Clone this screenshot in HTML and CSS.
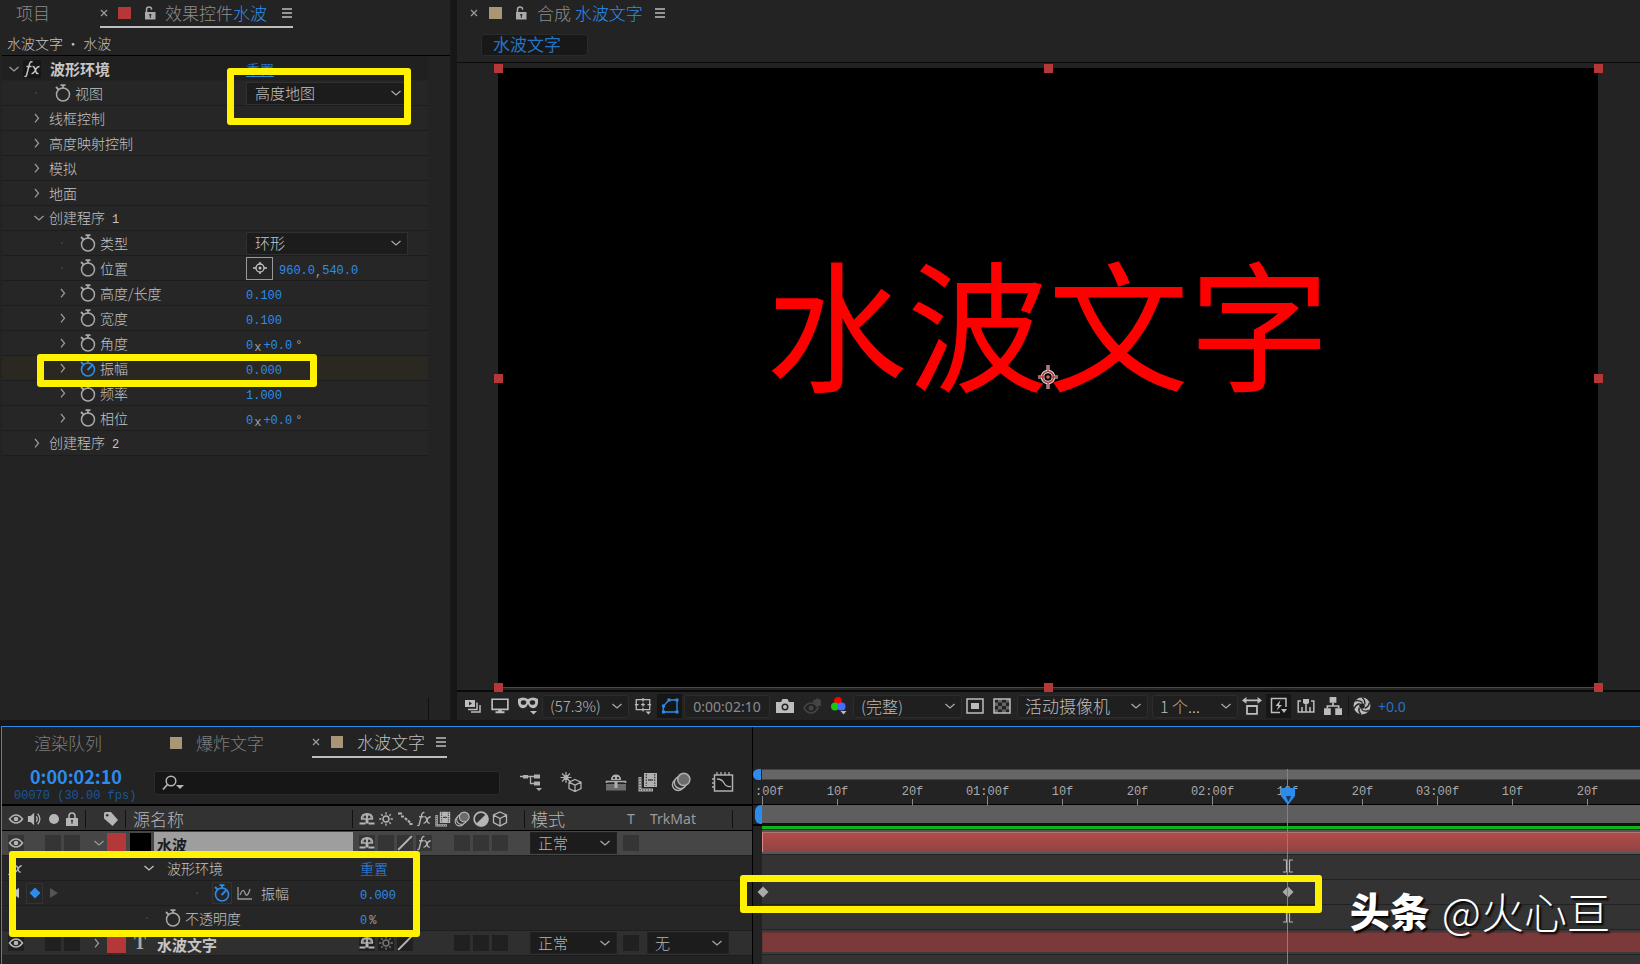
FILE: index.html
```html
<!DOCTYPE html>
<html lang="zh-CN">
<head>
<meta charset="utf-8">
<title>水波文字</title>
<link rel="stylesheet" href="styles.css">
</head>
<body>
<svg class="defs" aria-hidden="true">
  <symbol id="watch" viewBox="0 0 16 18"><circle cx="8" cy="10.5" r="6.5" fill="none" stroke="currentColor" stroke-width="1.5"/><path d="M5.5 1.2h5M8 1v3.5M1 3l2.500 2.500" fill="none" stroke="currentColor" stroke-width="1.8"/></symbol>
  <symbol id="watch-on" viewBox="0 0 16 18"><circle cx="8" cy="10.5" r="6.5" fill="none" stroke="currentColor" stroke-width="1.6"/><path d="M5.5 1.2h5M8 1v3.5M1 3l2.500 2.500M7.500 11l4.500-4.500" fill="none" stroke="currentColor" stroke-width="1.8"/></symbol>
  <symbol id="right" viewBox="0 0 16 16"><path d="M7 4l3.500 4.200L7 12.400" fill="none" stroke="currentColor" stroke-width="1.3"/></symbol>
  <symbol id="down" viewBox="0 0 16 16"><path d="M3.500 6L8 10l4.500-4" fill="none" stroke="currentColor" stroke-width="1.3"/></symbol>
  <symbol id="lock-open" viewBox="0 0 12 14"><path d="M2.500 6V3.500Q2.500 1 5 1t2.500 2v.8" fill="none" stroke="currentColor" stroke-width="1.500"/><path d="M1 6h10.500v7.500H1z" fill="currentColor"/><path d="M5.300 8h2v1.500h-.5V12h-1V9.500h-.5z" fill="#232323"/></symbol>
  <symbol id="lock" viewBox="0 0 12 14"><path d="M3 6V4q0-3 3-3t3 3v2" fill="none" stroke="currentColor" stroke-width="1.600"/><path d="M0 6h12v8H0z" fill="currentColor"/><path d="M5 8h2v1.500h-.5V12h-1V9.500H5z" fill="#323232"/></symbol>
  <symbol id="menu" viewBox="0 0 12 12"><path d="M1 2h10M1 6h10M1 10h10" stroke="currentColor" stroke-width="1.500"/></symbol>
  <symbol id="close" viewBox="0 0 8 8"><path d="M1 1l6 6M7 1L1 7" stroke="currentColor" stroke-width="1.300"/></symbol>
  <symbol id="fx" viewBox="0 0 18 18"><path d="M9.500 2Q7.500.8 6.500 4L3.500 15.500Q3 17 1.500 16M3.500 6.500h5M9.500 6.500Q11 6 12 9l1 3q.5 2 2.500 1.500M16.500 6.500Q14 6.500 12.500 10 10.500 14 8.500 13.500" fill="none" stroke="currentColor" stroke-width="1.500"/></symbol>
  <symbol id="target" viewBox="0 0 16 16"><circle cx="8" cy="8" r="4" fill="none" stroke="currentColor" stroke-width="1.300"/><circle cx="8" cy="8" r="1.500" fill="currentColor"/><path d="M8 2v2M8 12v2M1 8h3M12 8h3" stroke="currentColor" stroke-width="1.500"/></symbol>
  <symbol id="eye" viewBox="0 0 16 12"><path d="M1.500 6q3-4 6.500-4t6.500 4q-3 4-6.500 4T1.500 6z" fill="none" stroke="currentColor" stroke-width="1.600"/><circle cx="8" cy="6" r="2.300" fill="currentColor"/></symbol>
  <symbol id="speaker" viewBox="0 0 18 16"><path d="M1 4.500h3L8 1v14l-4-3.500H1z" fill="currentColor"/><path d="M10.500 5q2 3 0 6M12 2q5 6 0 12" fill="none" stroke="currentColor" stroke-width="1.400"/></symbol>
  <symbol id="tag" viewBox="0 0 16 16"><path d="M1 2.500Q1 1 2.500 1H8l7 8-5.500 6L1 7.500z" fill="currentColor"/><circle cx="4.200" cy="4.200" r="1.300" fill="#323232"/></symbol>
  <symbol id="shy" viewBox="0 0 16 16"><path d="M2.500 8Q2.500 2.700 8 2.700T13.500 8M8 3v9M2 8h12" fill="none" stroke="currentColor" stroke-width="1.600"/><path d="M3.500 7Q4 3 8 3t4.500 4z" fill="currentColor" opacity=".65"/><path d="M5.200 5h1.600v2H5.200zM9.200 5h1.600v2H9.200z" fill="#262626"/><path d="M.5 12.500h6M9.500 12.500h6" stroke="currentColor" stroke-width="1.800"/><path d="M6.500 9h3v3.500h-3z" fill="currentColor"/></symbol>
  <symbol id="sun" viewBox="0 0 14 14"><circle cx="7" cy="7" r="2.600" fill="none" stroke="currentColor" stroke-width="1.300"/><path d="M7 1v2M7 11v2M1 7h2M11 7h2M2.800 2.800l1.300 1.300M9.900 9.900l1.300 1.300M11.200 2.800L9.900 4.100M4.100 9.900l-1.300 1.300" stroke="currentColor" stroke-width="1.200"/></symbol>
  <symbol id="dash" viewBox="0 0 16 16"><path d="M1 2.500h4M4 5.500h3M8 7l2 2M11 9.500l2 2M12.500 13h3" stroke="currentColor" stroke-width="2.200"/></symbol>
  <symbol id="slash" viewBox="0 0 14 14"><path d="M1 13L13 1" stroke="currentColor" stroke-width="1.800"/></symbol>
  <symbol id="film" viewBox="0 0 20 20"><path d="M6 1h13v14H6z" fill="currentColor"/><path d="M8.300 2v12M16.700 2v12" stroke="#333" stroke-width="1.200" stroke-dasharray="1.400 1.400"/><path d="M10 8h5" stroke="#444" stroke-width="1.500"/><path d="M2 5v13h13" fill="none" stroke="currentColor" stroke-width="3"/><path d="M2 6v12h13" fill="none" stroke="#333" stroke-width="1" stroke-dasharray="1.400 1.400"/></symbol>
  <symbol id="blur" viewBox="0 0 18 18"><circle cx="6.500" cy="11.500" r="5.200" fill="none" stroke="currentColor" stroke-width="1.300"/><circle cx="8.500" cy="9.500" r="5.500" fill="#323232" stroke="currentColor" stroke-width="1.300"/><circle cx="11.500" cy="6.700" r="5.500" fill="#6c6c6c" stroke="currentColor" stroke-width="1.300"/></symbol>
  <symbol id="half" viewBox="0 0 14 14"><circle cx="7" cy="7" r="6" fill="none" stroke="currentColor" stroke-width="1.500"/><path d="M11.200 2.800A6 6 0 1 1 2.800 11.200z" fill="currentColor"/></symbol>
  <symbol id="cube" viewBox="0 0 16 16"><path d="M8 1l6.500 3v7.500L8 15l-6.500-3.500V4zM1.500 4L8 7.500 14.500 4M8 7.500V15" fill="none" stroke="currentColor" stroke-width="1.300"/></symbol>
  <symbol id="graph" viewBox="0 0 16 14"><path d="M1 1v12h14M3 9q3-8 5-2t5-4" fill="none" stroke="currentColor" stroke-width="1.300"/></symbol>
  <symbol id="diamond" viewBox="0 0 12 12"><path d="M6 .5L11.500 6 6 11.500.5 6z" fill="currentColor"/></symbol>
  <symbol id="play" viewBox="0 0 8 12"><path d="M0 1l8 5-8 5z" fill="currentColor"/></symbol>
  <symbol id="back" viewBox="0 0 8 12"><path d="M8 1L0 6l8 5z" fill="currentColor"/></symbol>
  <symbol id="search" viewBox="0 0 22 16"><circle cx="9" cy="6" r="4.800" fill="none" stroke="currentColor" stroke-width="1.500"/><path d="M5.500 9.500L1 14.500" stroke="currentColor" stroke-width="1.800"/><path d="M14 10h8l-4 4z" fill="currentColor"/></symbol>
  <symbol id="tree" viewBox="0 0 22 20"><path d="M0 4.500h14M10.500 4.500v7H15" fill="none" stroke="currentColor" stroke-width="1.300"/><path d="M3 3h5v3.500H3zM14 2.500h6v4h-6zM14 9.500h6v4h-6zM16 16h6l-3 3z" fill="currentColor"/></symbol>
  <symbol id="draft" viewBox="0 0 22 20"><path d="M6 0v11M.500 5.500h11M2 1.500l8 8M10 1.500l-8 8" stroke="currentColor" stroke-width="1.200"/><circle cx="6" cy="5.500" r="2.500" fill="currentColor"/><path d="M15 7.500l6 2.700v6.300L15 19.500l-6-3v-6.300zM9 10.200l6 3 6-3M15 13.200v6.300" fill="#232323" stroke="currentColor" stroke-width="1.300"/></symbol>
  <symbol id="shy-all" viewBox="0 0 22 20"><path d="M1 12h20v6.500H1z" fill="#6c6c6c"/><path d="M6 8Q6 2.500 11 2.500T16 8z" fill="currentColor"/><path d="M8 5h2v2H8zM12 5h2v2h-2z" fill="#333"/><path d="M1.500 11V9.500h19V11" fill="none" stroke="currentColor" stroke-width="1.500"/><path d="M9.500 9h3v7h-3z" fill="currentColor"/></symbol>
  <symbol id="curve" viewBox="0 0 22 20"><path d="M2.500 3h18v16h-18z" fill="#1b1b1b" stroke="currentColor" stroke-width="1.500"/><path d="M5 0v3M9 0v3M13 0v3M17 0v3M0 7h2M0 11h2M0 15h2M5 7q5 0 7 4t7 3.500" fill="none" stroke="currentColor" stroke-width="1.300"/></symbol>
  <symbol id="stack" viewBox="0 0 18 14"><path d="M1 1h10v7H1z" fill="currentColor"/><path d="M5 2.500l3 2-3 2z" fill="#232323"/><path d="M13 3.500v7H4M16 6v7H7" fill="none" stroke="currentColor" stroke-width="1.500"/></symbol>
  <symbol id="monitor" viewBox="0 0 16 14"><path d="M1 1h14v9H1z" fill="none" stroke="currentColor" stroke-width="1.500"/><path d="M4 12.500h8M6.500 11.500h3" stroke="currentColor" stroke-width="1.800"/></symbol>
  <symbol id="mask" viewBox="0 0 20 18"><path d="M0 2q5-3 10 0 5-3 10 0v4q-1 6-6 5-3-1-4-4-1 3-4 4-5 1-6-5z" fill="currentColor"/><ellipse cx="5.500" cy="5.500" rx="2.700" ry="2.300" fill="#232323"/><ellipse cx="14.500" cy="5.500" rx="2.700" ry="2.300" fill="#232323"/><path d="M12 14h7l-3.500 3.500z" fill="currentColor"/></symbol>
  <symbol id="grid" viewBox="0 0 18 20"><path d="M1.500 3h15v11h-15zM9 1v4M9 6.500v4M9 12v4M0 8.500h4M7 8.500h4M14 8.500h4" fill="none" stroke="currentColor" stroke-width="1.400"/><path d="M12 16h6l-3 3.500z" fill="currentColor"/></symbol>
  <symbol id="shape" viewBox="0 0 18 16"><path d="M2 14l.5-6L8 2h8v12z" fill="none" stroke="currentColor" stroke-width="1.300"/><path d="M1 12.500h3v3H1zM14.500 12.500h3v3h-3zM14.500 .5h3v3h-3zM6.500 .5h3v3h-3zM1 6.500h3v3H1z" fill="currentColor"/></symbol>
  <symbol id="camera" viewBox="0 0 18 16"><path d="M0 4h5l1.500-3h5L13 4h5v11H0z" fill="currentColor"/><circle cx="9" cy="9" r="3.500" fill="#232323"/><circle cx="9" cy="9" r="2" fill="currentColor"/></symbol>
  <symbol id="snap" viewBox="0 0 18 16"><path d="M1 10q3-5 7-5t7 5q-3 5-7 5t-7-5z" fill="none" stroke="currentColor" stroke-width="1.500"/><circle cx="8" cy="10" r="2.500" fill="currentColor"/><path d="M10 2h2l1-1.500h3L17 2h1v6h-4l-4-4z" fill="currentColor"/></symbol>
  <symbol id="rgb" viewBox="0 0 16 18"><circle cx="7" cy="4" r="4" fill="#f00"/><circle cx="4" cy="9.500" r="4" fill="#1bc40e"/><circle cx="10.500" cy="9.500" r="4" fill="#466cff"/><path d="M9.500 14h6l-3 3.500z" fill="#bbb"/></symbol>
  <symbol id="roi" viewBox="0 0 18 16"><path d="M1 1h16v14H1z" fill="none" stroke="currentColor" stroke-width="1.500"/><path d="M5 5h8v6H5z" fill="currentColor"/></symbol>
  <symbol id="checker" viewBox="0 0 18 16"><path d="M5 1h4v3.500H5zM13 1h4v3.500h-4zM1 4.500h4V8H1zM9 4.500h4V8H9zM5 8h4v3.500H5zM13 8h4v3.500h-4zM1 11.500h4V15H1zM9 11.500h4V15H9z" fill="#666"/><path d="M1 1h16v14H1z" fill="none" stroke="currentColor" stroke-width="1.500"/></symbol>
  <symbol id="aspect" viewBox="0 0 18 16"><path d="M3 3h12M4.500 8h9v7h-9z" fill="none" stroke="currentColor" stroke-width="1.600"/><path d="M4 0v6L0 3zM14 0v6l4-3z" fill="currentColor"/></symbol>
  <symbol id="fast" viewBox="0 0 18 18"><path d="M16 10V1.500H1.500v14H10" fill="none" stroke="currentColor" stroke-width="1.500"/><path d="M10.500 3l-5 6h3l-2 4.500L12 8H9zM11 12h6l-3 4z" fill="currentColor"/></symbol>
  <symbol id="tline" viewBox="0 0 18 14"><path d="M4 2H1.200v11h15.600V2H14M5 13V8M9 13V6M13 13V8" fill="none" stroke="currentColor" stroke-width="1.500"/><path d="M6 0h6v4L9 6 6 4z" fill="currentColor"/></symbol>
  <symbol id="flow" viewBox="0 0 16 16"><path d="M5 0h6v5H5zM0 10h6v6H0zM10 10h6v6h-6z" fill="currentColor"/><path d="M8 5v3M3 10V8h10v2" fill="none" stroke="currentColor" stroke-width="1.500"/></symbol>
  <symbol id="iris" viewBox="0 0 16 16"><circle cx="8" cy="8" r="5" fill="none" stroke="currentColor" stroke-width="5"/><path d="M8 .5Q11 3 10.500 6.500M14.500 5Q14 9 10.500 10M14 12Q10 13.500 7.500 11M7 15.500Q4.500 12.500 5.500 9.500M1 10.500Q2.500 6.500 6 6M2 3.500Q6 2.500 8.500 5" fill="none" stroke="#232323" stroke-width="1.200"/></symbol>
  <symbol id="anchor" viewBox="0 0 22 26"><path d="M11 1v6M11 19v6M1 13h6M15 13h6" stroke="#ddd" stroke-width="3"/><circle cx="11" cy="13" r="5.500" fill="none" stroke="#ddd" stroke-width="3.600"/><circle cx="11" cy="13" r="5.500" fill="none" stroke="#b53a3a" stroke-width="1.500"/><path d="M11 1v6M11 19v6M1 13h6M15 13h6" stroke="#b53a3a" stroke-width="1.300"/><circle cx="11" cy="13" r="1.800" fill="#c66"/></symbol>
  <symbol id="cti" viewBox="0 0 16 18"><path d="M1 1h14v8l-7 9-7-9z" fill="#2d8ceb"/><path d="M6 9h5l-1 3-1.500 3L7 12z" fill="#1b3b5e"/></symbol>
  <symbol id="ibeam" viewBox="0 0 10 14"><path d="M0 1h4M6 1h4M0 13h4M6 13h4M3.500 1v12M6.500 1v12" stroke="#b5b5b5" stroke-width="1.200"/></symbol>
</svg>

<main class="app">
  <div class="upper">
    <section class="effects">
      <header class="tabs">
        <span class="tab project">项目</span>
        <span class="tab active">
          <svg class="i8"><use href="#close"/></svg><i class="chip red"></i><svg class="ilock"><use href="#lock-open"/></svg>
          <span class="title">效果控件<b>水波</b></span><svg class="i12"><use href="#menu"/></svg>
        </span>
      </header>
      <div class="path">水波文字 • 水波</div>
      <div class="props">
        <div class="row head"><span class="name d0"><svg class="i16"><use href="#down"/></svg><span class="fxbox"><svg class="i18"><use href="#fx"/></svg></span><strong>波形环境</strong></span><a class="link" href="#">重置</a></div>
        <div class="row"><label class="name d1" for="view"><i class="dot"></i><svg class="watch"><use href="#watch"/></svg>视图</label><span class="pick"><select id="view"><option>高度地图</option></select><svg class="i16"><use href="#down"/></svg></span></div>
        <div class="row"><span class="name d1"><svg class="i16"><use href="#right"/></svg><span class="group">线框控制</span></span></div>
        <div class="row"><span class="name d1"><svg class="i16"><use href="#right"/></svg><span class="group">高度映射控制</span></span></div>
        <div class="row"><span class="name d1"><svg class="i16"><use href="#right"/></svg><span class="group">模拟</span></span></div>
        <div class="row"><span class="name d1"><svg class="i16"><use href="#right"/></svg><span class="group">地面</span></span></div>
        <div class="row"><span class="name d1 open"><svg class="i16"><use href="#down"/></svg><span class="group">创建程序<span class="mono">1</span></span></span></div>
        <div class="row"><label class="name d2" for="kind"><i class="dot"></i><svg class="watch"><use href="#watch"/></svg>类型</label><span class="pick"><select id="kind"><option>环形</option></select><svg class="i16"><use href="#down"/></svg></span></div>
        <div class="row"><span class="name d2"><i class="dot"></i><svg class="watch"><use href="#watch"/></svg>位置</span><button class="point" aria-label="位置"><svg class="i16"><use href="#target"/></svg></button><span class="num">960.0<em>,</em>540.0</span></div>
        <div class="row"><span class="name d2"><svg class="i16"><use href="#right"/></svg><svg class="watch"><use href="#watch"/></svg>高度/长度</span><span class="num">0.100</span></div>
        <div class="row"><span class="name d2"><svg class="i16"><use href="#right"/></svg><svg class="watch"><use href="#watch"/></svg>宽度</span><span class="num">0.100</span></div>
        <div class="row"><span class="name d2"><svg class="i16"><use href="#right"/></svg><svg class="watch"><use href="#watch"/></svg>角度</span><span class="num">0<em class="turn">x</em>+0.0<em class="deg">°</em></span></div>
        <div class="row keyed"><span class="name d2"><svg class="i16"><use href="#right"/></svg><svg class="watch on"><use href="#watch-on"/></svg>振幅</span><span class="num">0.000</span></div>
        <div class="row"><span class="name d2"><svg class="i16"><use href="#right"/></svg><svg class="watch"><use href="#watch"/></svg>频率</span><span class="num">1.000</span></div>
        <div class="row"><span class="name d2"><svg class="i16"><use href="#right"/></svg><svg class="watch"><use href="#watch"/></svg>相位</span><span class="num">0<em class="turn">x</em>+0.0<em class="deg">°</em></span></div>
        <div class="row"><span class="name d1"><svg class="i16"><use href="#right"/></svg><span class="group">创建程序<span class="mono">2</span></span></span></div>
      </div>
      <i class="corner"></i>
      <div class="mark mark-view"></div>
      <div class="mark mark-amp"></div>
    </section>

    <section class="comp">
      <header class="tabs comp-tabs">
        <svg class="i8"><use href="#close"/></svg><i class="chip tan"></i><svg class="ilock"><use href="#lock-open"/></svg>
        <span class="title">合成 <b>水波文字</b></span><svg class="i12"><use href="#menu"/></svg>
      </header>
      <div class="flowbar"><button class="flowtab">水波文字</button></div>
      <div class="viewer">
        <div class="canvas">
          <span class="water">水波文字</span>
          <svg class="anchor"><use href="#anchor"/></svg>
          <i class="h tl"></i><i class="h tc"></i><i class="h tr"></i><i class="h ml"></i><i class="h mr"></i><i class="h bl"></i><i class="h bc"></i><i class="h br"></i>
        </div>
      </div>
      <footer class="viewbar">
        <svg class="v18"><use href="#stack"/></svg>
        <svg class="v18 g8"><use href="#monitor"/></svg>
        <svg class="v20 g8"><use href="#mask"/></svg>
        <span class="pick zoom"><select aria-label="缩放"><option>(57.3%)</option></select><svg class="i16"><use href="#down"/></svg></span>
        <svg class="v20 g4"><use href="#grid"/></svg>
        <span class="vbox g4 blue"><svg class="v18"><use href="#shape"/></svg></span>
        <button class="time">0:00:02:10</button>
        <svg class="v18 g6"><use href="#camera"/></svg>
        <svg class="v18 g8 dim"><use href="#snap"/></svg>
        <svg class="v18 g8"><use href="#rgb"/></svg>
        <span class="pick res"><select aria-label="分辨率"><option>(完整)</option></select><svg class="i16"><use href="#down"/></svg></span>
        <svg class="v18 g4"><use href="#roi"/></svg>
        <svg class="v18 g8"><use href="#checker"/></svg>
        <span class="pick camsel"><select aria-label="视图"><option>活动摄像机</option></select><svg class="i16"><use href="#down"/></svg></span>
        <span class="pick views"><select aria-label="视图数"><option>1 个...</option></select><svg class="i16"><use href="#down"/></svg></span>
        <svg class="v20 g4"><use href="#aspect"/></svg>
        <span class="vbox g4"><svg class="v18"><use href="#fast"/></svg></span>
        <svg class="v18 g6"><use href="#tline"/></svg>
        <svg class="v18 g8"><use href="#flow"/></svg>
        <i class="split"></i>
        <svg class="v18 g4"><use href="#iris"/></svg>
        <span class="expo">+0.0</span>
      </footer>
    </section>
  </div>

  <section class="timeline">
    <div class="layers">
      <header class="ttabs">
        <span class="tab">渲染队列</span>
        <span class="tab second"><i class="chip small tan"></i>爆炸文字</span>
        <span class="tab active"><svg class="i8"><use href="#close"/></svg><i class="chip small tan"></i><span>水波文字</span><svg class="i12"><use href="#menu"/></svg></span>
      </header>
      <div class="tools">
        <div class="clock"><strong>0:00:02:10</strong><span>00070 (30.00 fps)</span></div>
        <label class="search"><svg><use href="#search"/></svg><input type="text" aria-label="搜索"></label>
        <div class="toggles">
          <svg><use href="#tree"/></svg><svg><use href="#draft"/></svg><svg><use href="#shy-all"/></svg><svg><use href="#film"/></svg><svg><use href="#blur"/></svg><svg><use href="#curve"/></svg>
        </div>
      </div>
      <div class="line cols">
        <span class="av"><svg class="i16"><use href="#eye"/></svg><svg class="i16"><use href="#speaker"/></svg><i class="solo"></i><svg class="i14"><use href="#lock"/></svg></span>
        <span class="lab"><svg class="i16"><use href="#tag"/></svg></span>
        <span class="src">源名称</span>
        <span class="sw"><svg><use href="#shy"/></svg><svg><use href="#sun"/></svg><svg><use href="#dash"/></svg><svg><use href="#fx"/></svg><svg><use href="#film"/></svg><svg><use href="#blur"/></svg><svg><use href="#half"/></svg><svg><use href="#cube"/></svg></span>
        <span class="mode"><span class="m1">模式</span><span class="m2">T</span><span class="m3">TrkMat</span></span>
      </div>
      <div class="line layer sel">
        <span class="av"><i class="cell"><svg class="i16"><use href="#eye"/></svg></i><i class="cell c2"></i><i class="cell"></i></span>
        <span class="lab"><svg class="i16"><use href="#down"/></svg><i class="color"></i></span>
        <span class="src"><i class="thumb"></i><strong>水波</strong></span>
        <span class="sw"><i><svg><use href="#shy"/></svg></i><i></i><i><svg><use href="#slash"/></svg></i><i><svg><use href="#fx"/></svg></i><u></u><i></i><i></i><i></i></span>
        <span class="mode"><span class="pick blend"><select aria-label="混合模式"><option>正常</option></select><svg class="i16"><use href="#down"/></svg></span><i class="cell"></i></span>
      </div>
      <div class="line prop"><span class="fxs"><svg class="i16"><use href="#fx"/></svg></span><span class="pname p1"><svg class="i16"><use href="#down"/></svg>波形环境</span><a class="link" href="#">重置</a></div>
      <div class="line prop"><span class="fxs nav"><svg class="arrow"><use href="#back"/></svg><button class="key" aria-label="关键帧"><svg><use href="#diamond"/></svg></button><svg class="arrow off"><use href="#play"/></svg></span><span class="pname p2"><i class="dot"></i><span class="wbox"><svg class="watch on"><use href="#watch-on"/></svg></span><svg class="i16"><use href="#graph"/></svg>振幅</span><span class="num">0.000</span></div>
      <div class="line prop"><span class="fxs"></span><span class="pname p3"><i class="dot"></i><svg class="watch"><use href="#watch"/></svg>不透明度</span><span class="num">0<em class="pct">%</em></span></div>
      <div class="line layer">
        <span class="av"><i class="cell"><svg class="i16"><use href="#eye"/></svg></i><i class="cell c2"></i><i class="cell"></i></span>
        <span class="lab shut"><svg class="i16"><use href="#right"/></svg><i class="color"></i></span>
        <span class="src"><i class="type">T</i><strong>水波文字</strong></span>
        <span class="sw"><i><svg><use href="#shy"/></svg></i><i class="faint"><svg><use href="#sun"/></svg></i><i><svg><use href="#slash"/></svg></i><u></u><u></u><i></i><i></i><i></i></span>
        <span class="mode"><span class="pick blend"><select aria-label="混合模式"><option>正常</option></select><svg class="i16"><use href="#down"/></svg></span><i class="cell"></i><span class="pick matte"><select aria-label="轨道遮罩"><option>无</option></select><svg class="i16"><use href="#down"/></svg></span></span>
      </div>
      <div class="mark mark-layer"></div>
    </div>

    <div class="graph">
      <div class="nav-bar"><i></i><span></span></div>
      <div class="ruler"><span class="first">:00f</span><span>10f</span><span>20f</span><span class="big">01:00f</span><span>10f</span><span>20f</span><span class="big">02:00f</span><span>10f</span><span>20f</span><span class="big">03:00f</span><span>10f</span><span>20f</span></div>
      <div class="work"><i></i><span></span></div>
      <div class="tracks">
        <div class="track hot"><span class="bar"></span></div>
        <div class="track"></div>
        <div class="track"></div>
        <div class="track"></div>
        <div class="track last"><span class="bar flat"></span></div>
      </div>
      <svg class="kf k1"><use href="#diamond"/></svg>
      <svg class="beam b1"><use href="#ibeam"/></svg>
      <svg class="beam b2"><use href="#ibeam"/></svg>
      <svg class="kf k2"><use href="#diamond"/></svg>
      <i class="playhead"></i>
      <svg class="cti"><use href="#cti"/></svg>
      <div class="mark mark-keys"></div>
    </div>
    <div class="credit"><strong>头条</strong><span>@火心亘</span></div>
  </section>
</main>
</body>
</html>
```
FILE: styles.css
```css
* { box-sizing: border-box; }
html, body { height: 100%; }
body {
  margin: 0;
  background: #161616;
  color: #c4c4c4;
  font: 14px/20px "Noto Sans CJK SC", sans-serif;
  font-weight: 300;
  overflow: hidden;
}
svg { flex: none; display: block; }
i, em, u { font-style: normal; text-decoration: none; flex: none; }
b { font-weight: inherit; color: #2d8ceb; }
select, button, input {
  font: inherit; color: inherit; background: none; border: 0; margin: 0; padding: 0;
  appearance: none; outline: 0;
}
.defs { position: absolute; width: 0; height: 0; }
.i8 { width: 8px; height: 8px; color: #999; }
.i12 { width: 12px; height: 12px; }
.i14 { width: 14px; height: 14px; }
.i16 { width: 16px; height: 16px; }
.i18 { width: 18px; height: 18px; }
.ilock { width: 12px; height: 14px; }

.app { display: flex; flex-direction: column; height: 100vh; min-width: 1200px; }
.upper { flex: 1; min-height: 0; display: flex; gap: 6px; margin-bottom: 6px; }

/* effect controls */
.effects { position: relative; width: 451px; background: #232323; padding-left: 2px; border-right: 1px solid #1b1b1b; }
.tabs { display: flex; height: 28px; font-size: 17px; line-height: 26px; color: #8c8c8c; }
.project { width: 98px; padding-left: 14px; }
.tab.active { display: flex; align-items: center; border-bottom: 2px solid #bdbdbd; }
.tab.active .i12 { margin-left: 14px; color: #bdbdbd; }
.chip { width: 13px; height: 12px; margin: 0 13px 0 11px; }
.chip.red { background: #b53838; margin-left: 10px; }
.chip.tan { background: #a99676; }
.chip.small { width: 12px; margin: 0 14px 0 0; }
.ilock { color: #aaa; margin-right: 10px; }
.effects .ilock { margin-right: 9px; }
.path { height: 28px; line-height: 30px; padding-left: 5px; border-bottom: 1px solid #000; }
.props { width: 426px; background: #262626; }
.row { display: flex; align-items: center; height: 25px; border-bottom: 1px solid #1d1d1d; }
.row.head { background: #202020; border-color: #232323; padding-top: 2px; }
.row.keyed { background: #2b2721; }
.name { display: flex; align-items: center; width: 244px; line-height: 24px; }
.name .i16 { color: #9a9a9a; }
.d0 { padding-left: 4px; }
.d1 { padding-left: 26px; }
.d1.open { padding-left: 29px; }
.d1.open .group { margin-left: 2px; }
.d2 { padding-left: 52px; }
.d1 .watch { margin-left: 11px; }
.group { margin-left: 5px; }
strong { font-weight: 700; font-size: 15px; color: #c6c6c6; }
.fxbox { background: #161616; margin: 0 9px 0 1px; }
.dot { width: 16px; height: 16px; display: flex; align-items: center; justify-content: center; }
.dot::before { content: ""; width: 2px; height: 2px; background: #3c3c3c; }
.watch { width: 16px; height: 18px; margin: 0 4px 0 10px; color: #a8a8a8; }
.watch.on { color: #2d8ceb; }
.link { color: #2d8ceb; text-decoration: none; }
.head .link { text-decoration: underline; }
.mono, .num { font-family: "Liberation Mono", monospace; font-size: 12px; font-weight: 400; }
.mono { margin-left: 7px; }
.num { color: #2d8ceb; padding-top: 5px; }
.num em { color: #a0a0a0; position: relative; top: 2px; }
.num .turn { padding: 0 2px 0 1px; }
.num em.deg { top: 0; padding-left: 3px; }
.num em.pct { top: 0; padding-left: 2px; }
.pick { position: relative; display: flex; align-items: center; height: 23px; width: 162px; border: 1px solid #303030; background: #1c1c1c; font-size: 15px; line-height: 20px; }
.pick select { width: 100%; height: 100%; padding-left: 8px; }
.pick > svg { position: absolute; right: 3px; pointer-events: none; color: #a8a8a8; }
.point { width: 27px; height: 23px; border: 1px solid #999; display: flex; align-items: center; justify-content: center; margin-right: 6px; }
.corner { position: absolute; left: 428px; bottom: 0; width: 1px; height: 22px; background: #111; }

/* annotations */
.mark { position: absolute; border: 7px solid #fff200; border-radius: 3px; pointer-events: none; }
.mark-view { left: 227px; top: 68px; width: 184px; height: 57px; }
.mark-amp { left: 37px; top: 354px; width: 280px; height: 33px; }
.mark-layer { left: 7px; top: 124px; width: 411px; height: 86px; }
.mark-keys { left: -13px; top: 148px; width: 582px; height: 38px; }

/* composition */
.comp { flex: 1; min-width: 0; background: #232323; display: flex; flex-direction: column; }
.comp-tabs { align-items: center; height: 26px; padding-left: 13px; flex: none; }
.comp-tabs .i12 { margin-left: 11px; color: #bdbdbd; }
.flowbar { height: 37px; flex: none; padding: 8px 0 0 24px; border-bottom: 1px solid #0c0c0c; }
.flowtab { display: block; width: 107px; height: 22px; border: 1px solid #2b2b2b; border-radius: 3px; background: #181818; color: #2474c4; font-size: 17px; line-height: 18px; text-align: left; padding: 0 0 2px 11px; font-weight: 400; }
.viewer { flex: 1; min-height: 0; padding: 5px 42px 2px 41px; border-bottom: 2px solid #0a0a0a; }
.canvas { position: relative; height: 100%; background: #000; border-bottom: 1px solid #7c3535; display: flex; justify-content: center; align-items: flex-start; }
.water { font-size: 141px; line-height: 180px; color: #f00; font-weight: 400; margin-top: 162px; white-space: nowrap; }
.anchor { position: absolute; left: calc(50% - 11px); top: calc(50% - 14px); width: 22px; height: 26px; }
.h { position: absolute; width: 9px; height: 9px; background: #b53838; }
.tl, .ml, .bl { left: -4px; }
.tc, .bc { left: calc(50% - 4px); }
.tr, .mr, .br { right: -5px; }
.tl, .tc, .tr { top: -4px; }
.ml, .mr { top: calc(50% - 4px); }
.bl, .bc, .br { bottom: -5px; }
.viewbar { display: flex; align-items: center; height: 28px; flex: none; padding-left: 7px; font-size: 15px; color: #bdbdbd; }
.viewbar > svg, .vbox > svg { height: 18px; }
.v18 { width: 18px; }
.v20 { width: 20px; }
.g4 { margin-left: 4px; }
.g6 { margin-left: 6px; }
.g8 { margin-left: 9px; }
.viewbar .pick, .time { height: 23px; border: 1px solid #2d2d2d; border-radius: 3px; background: #1f1f1f; }
.viewbar .pick { font-size: 17px; }
.viewbar .pick select { padding-left: 7px; }
.viewbar .zoom { width: 87px; margin-left: 4px; font-size: 15px; }
.viewbar .res, .viewbar .views { font-size: 16px; }
.vbox { display: flex; align-items: center; justify-content: center; width: 25px; height: 24px; background: #161616; }
.blue { color: #2d8ceb; }
.time { width: 86px; margin-left: 2px; color: #8c8c8c; text-align: center; font: 14px "Noto Sans", sans-serif; }
.dim { color: #444; }
.res { width: 109px; margin-left: 5px; }
.camsel { width: 131px; margin-left: 6px; }
.views { width: 86px; margin-left: 4px; }
.split { width: 1px; height: 22px; background: #161616; margin-left: 6px; }
.expo { color: #2474c4; font: 14px "Noto Sans", sans-serif; margin-left: 7px; }

/* timeline */
.timeline { position: relative; height: 238px; flex: none; display: flex; background: #232323; border-top: 1px solid #2d8ceb; border-left: 1px solid #2d8ceb; margin-left: 1px; overflow: hidden; }
.layers { position: relative; width: 751px; flex: none; border-right: 1px solid #000; }
.ttabs { display: flex; height: 31px; font-size: 17px; line-height: 33px; color: #7f7f7f; padding-left: 32px; white-space: nowrap; }
.ttabs .tab { display: flex; align-items: center; width: 136px; }
.ttabs .second { width: 142px; }
.ttabs .tab.active { width: 135px; color: #bdbdbd; }
.ttabs .i8 { margin-right: 11px; }
.ttabs .tab.active .i12 { margin-left: 10px; }
.tools { display: flex; height: 46px; }
.clock { width: 152px; display: flex; flex-direction: column; padding: 6px 0 0 12px; }
.clock strong { color: #2d8ceb; font: 600 18px/24px "Noto Sans CJK SC", sans-serif; padding-left: 16px; }
.clock span { color: #1a5698; font: 12px/17px "Liberation Mono", monospace; white-space: nowrap; }
.search { display: flex; align-items: center; width: 346px; height: 24px; margin-top: 13px; border: 1px solid #2b2b2b; border-radius: 3px; background: #161616; padding-left: 7px; color: #b5b5b5; }
.search svg { width: 22px; height: 16px; }
.search input { flex: 1; min-width: 0; }
.toggles { display: flex; align-items: center; justify-content: space-between; width: 214px; margin-left: 20px; height: 48px; color: #b0b0b0; }
.toggles svg { width: 22px; height: 20px; }
.toggles svg:nth-child(2) { margin-left: 8px; }
.toggles svg:nth-child(3) { margin-left: 12px; }
.toggles svg:nth-child(6) { margin-left: 10px; }
.line { display: flex; height: 25px; border-bottom: 1px solid #1e1e1e; align-items: center; }
.cols { height: 27px; background: #323232; border: solid #000; border-width: 2px 0 1px; padding-top: 1px; color: #b5b5b5; }
.cols > span { border-right: 1px solid #111; }
.line > .av { width: 84px; display: flex; align-items: center; padding-left: 6px; height: 18px; }
.cols .av { gap: 3px; }
.cols .av .i14 { margin-left: 4px; width: 12px; }
.solo { width: 10px; height: 10px; border-radius: 50%; background: #b5b5b5; margin-left: 3px; }
.lab { width: 40px; display: flex; align-items: center; justify-content: flex-end; height: 18px; }
.cols .lab { padding-right: 6px; }
.src { width: 227px; display: flex; align-items: center; height: 18px; }
.cols .src { font-size: 17px; padding-left: 7px; }
.sw { width: 172px; display: flex; align-items: center; gap: 3px; padding-left: 6px; height: 18px; }
.sw svg { width: 16px; height: 16px; }
.sw i, .sw u { width: 16px; height: 16px; }
.sw i, .cell { background: #202020; display: block; }
.sw .faint { color: #777; }
.layer { background: #2f2f2f; color: #b5b5b5; }
.layer.sel { background: #464646; }
.sel .sw i, .sel .cell { background: #353535; }
.cell { width: 16px; height: 16px; }
.c2 { margin: 0 3px 0 21px; }
.color { width: 19px; height: 20px; background: #b53838; }
.lab .i16 { color: #999; }
.lab.shut .i16 { margin-right: 3px; }
.cols .lab .i16 { color: #b5b5b5; }
.thumb { width: 21px; height: 21px; background: #000; margin: 0 3px 0 4px; }
.type { width: 28px; text-align: center; font: bold 18px "Liberation Serif", serif; color: #aaa; }
.layer .src strong { flex: 1; line-height: 26px; height: 22px; padding-left: 3px; }
.sel .src strong { background: #9e9e9e; color: #1c1c1c; }
.mode { flex: 1; display: flex; align-items: center; height: 18px; }
.cols .mode { flex: none; width: 208px; }
.m1 { font-size: 17px; padding-left: 6px; width: 102px; }
.m2, .m3 { font: 14px "Noto Sans", sans-serif; color: #9a9a9a; }
.m2 { width: 23px; }
.mode .pick { height: 22px; border-color: #222; }
.mode .pick select { padding-left: 7px; }
.blend { width: 87px; margin: 0 6px 0 5px; }
.matte { width: 82px; margin-left: 8px; }
.prop { background: #262626; }
.fxs { width: 86px; padding-left: 5px; }
.fxs .i16 { color: #b5b5b5; }
.nav { display: flex; align-items: center; padding-left: 9px; }
.arrow { width: 8px; height: 12px; }
.arrow.off { color: #555; margin-left: 7px; }
.key { width: 17px; height: 21px; border: 1px solid #333; margin-left: 7px; color: #2d8ceb; display: flex; align-items: center; justify-content: center; }
.key svg { width: 12px; height: 12px; }
.pname { display: flex; align-items: center; width: 272px; }
.p1 { padding-left: 53px; }
.p1 .i16 { margin-right: 10px; }
.p2 { padding-left: 101px; }
.p2 .i16 { margin: 0 8px 0 5px; color: #999; }
.wbox { border: 1px solid #333; height: 22px; width: 20px; margin-left: 7px; display: flex; align-items: center; justify-content: center; }
.wbox .watch { margin: 0; }
.p3 { padding-left: 51px; }

.graph { position: relative; flex: 1; min-width: 0; display: flex; flex-direction: column; padding-top: 42px; }
.nav-bar, .work, .ruler { display: flex; flex: none; }
.nav-bar i { width: 8px; height: 11px; border-radius: 6px 0 0 6px; background: #2d8ceb; margin-right: 1px; }
.nav-bar span { flex: 1; height: 11px; background: #666; border: solid #444; border-width: 1px 0; }
.ruler { height: 25px; border-bottom: 1px solid #000; font: 12px/24px "Liberation Mono", monospace; color: #aaa; }
.ruler span { flex: none; width: 75px; text-align: center; height: 25px; background: linear-gradient(#888, #888) 37px 100% / 1px 6px no-repeat; }
.ruler .big { background-size: 1px 9px; }
.ruler .first { width: 47px; text-align: left; padding-left: 2px; background-position: 9px 100%; background-size: 1px 9px; }
.work { height: 25px; border-bottom: 1px solid #222; background: linear-gradient(#000, #000) 0 19px / 100% 2px no-repeat; }
.work i { width: 7px; height: 19px; margin-left: 2px; border-radius: 6px 0 0 6px; background: #2d8ceb; }
.work span { flex: 1; background: linear-gradient(#5e5e5e 0 18px, #111 18px 21px, #12b319 21px 24px); }
.tracks { flex: 1; min-height: 0; margin-left: 9px; background: #333; }
.track { height: 25px; border-bottom: 1px solid #222; }
.hot { background: #555; padding-top: 2px; }
.bar { display: block; height: 20px; background: linear-gradient(#b24b49, #8f4443); border-top: 1px solid #a77; border-left: 1px solid #d88; }
.last { padding-top: 2px; background: #3a3a3a; }
.bar.flat { background: #7b3939; border-color: #653434; }
.kf { position: absolute; width: 12px; height: 12px; color: #aaa; top: 159px; }
.k1 { left: 4px; }
.k2 { left: 529px; }
.beam { position: absolute; width: 10px; height: 14px; left: 530px; }
.b1 { top: 132px; }
.b2 { top: 182px; }
.playhead { position: absolute; left: 534px; top: 42px; bottom: 0; width: 1px; background: #4b8fd0; }
.cti { position: absolute; left: 527px; top: 60px; width: 16px; height: 18px; }
.credit { position: absolute; right: 30px; bottom: 24px; display: flex; gap: 12px; align-items: center; font-size: 43px; line-height: 60px; color: #fff; text-shadow: 2px 2px 2px #000; }
.credit strong { font-size: 40px; font-weight: 900; color: #fff; }
```
